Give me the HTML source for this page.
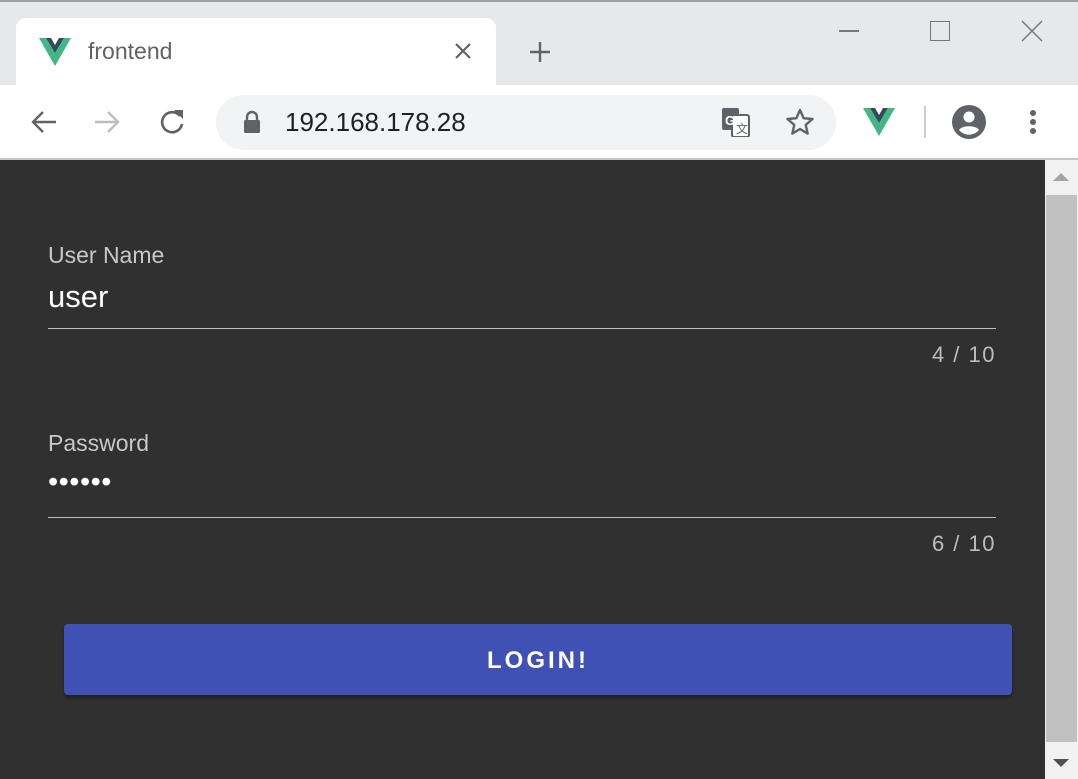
<!DOCTYPE html>
<html><head><style>
*{margin:0;padding:0;box-sizing:border-box}
body{width:1078px;height:779px;overflow:hidden;font-family:"Liberation Sans",sans-serif;background:#fff;position:relative}
.a{position:absolute}
</style></head><body>
<div class="a" style="left:0;top:0;width:1078px;height:2px;background:#a0a0a0"></div>
<div class="a" style="left:0;top:2px;width:1078px;height:83px;background:#e6e9ec"></div>
<div class="a" style="left:16px;top:18px;width:480px;height:70px;background:#fff;border-radius:10px 10px 0 0"></div>
<svg class="a" style="left:38px;top:38px" width="34" height="28" viewBox="0 0 34 28"><path d="M1 0h7l9 15 9-15h7L17 28z" fill="#41b883"/><path d="M8 0h5l4 7 4-7h5l-9 15z" fill="#35495e"/></svg>
<div class="a" style="left:88px;top:38px;font-size:23px;color:#5f6368">frontend</div>
<svg class="a" style="left:454px;top:42px" width="18" height="18"><path d="M2 2l14 14M16 2L2 16" stroke="#5f6368" stroke-width="2.2"/></svg>
<svg class="a" style="left:528px;top:40px" width="24" height="24"><path d="M12 2v20M2 12h20" stroke="#5f6368" stroke-width="2.4"/></svg>
<div class="a" style="left:839px;top:30px;width:20px;height:1.5px;background:#777"></div>
<div class="a" style="left:930px;top:21px;width:20px;height:20px;border:1.5px solid #777"></div>
<svg class="a" style="left:1021px;top:20px" width="22" height="22"><path d="M1 1l20 20M21 1L1 21" stroke="#777" stroke-width="1.5"/></svg>
<div class="a" style="left:0;top:85px;width:1078px;height:74px;background:#fff"></div>
<div class="a" style="left:0;top:158px;width:1078px;height:2px;background:#c8c8c8"></div>
<svg class="a" style="left:28px;top:108px" width="32" height="28"><path d="M28 14H5M15 4L5 14l10 10" stroke="#5f6368" stroke-width="2.4" fill="none"/></svg>
<svg class="a" style="left:92px;top:108px" width="32" height="28"><path d="M3 14h23M16 4l10 10-10 10" stroke="#bdbdbd" stroke-width="2.4" fill="none"/></svg>
<svg class="a" style="left:156px;top:106px" width="32" height="32" viewBox="0 0 32 32"><path d="M24 10A10 10 0 1 0 26 18" stroke="#5f6368" stroke-width="2.6" fill="none"/><path d="M18 4h9v9z" fill="#5f6368"/></svg>
<div class="a" style="left:216px;top:95px;width:620px;height:55px;background:#f1f3f4;border-radius:28px"></div>
<svg class="a" style="left:242px;top:110px" width="20" height="24"><path d="M5 10V7a5 5 0 0 1 10 0v3" stroke="#5f6368" stroke-width="2.4" fill="none"/><rect x="2" y="10" width="16" height="13" rx="1.5" fill="#5f6368"/></svg>
<div class="a" style="left:285px;top:107px;font-size:26px;color:#202124">192.168.178.28</div>
<svg class="a" style="left:720px;top:107px" width="32" height="30"><rect x="2" y="1" width="17" height="22" rx="2" fill="#5f6368"/><rect x="12" y="8" width="17" height="22" rx="2" fill="#fff" stroke="#5f6368" stroke-width="2"/><text x="5" y="18" font-size="13" font-weight="bold" fill="#fff" font-family="Liberation Sans">G</text><text x="16" y="26" font-size="12" fill="#5f6368" font-family="Liberation Sans">文</text></svg>
<svg class="a" style="left:784px;top:107px" width="32" height="30" viewBox="0 0 32 30"><path d="M16 3l3.6 8.2 8.9.8-6.8 5.9 2 8.7L16 22l-7.7 4.6 2-8.7-6.8-5.9 8.9-.8z" fill="none" stroke="#5f6368" stroke-width="2.4" stroke-linejoin="round"/></svg>
<svg class="a" style="left:862px;top:107px" width="34" height="30" viewBox="0 0 34 28"><path d="M1 0h7l9 15 9-15h7L17 28z" fill="#41b883"/><path d="M8 0h5l4 7 4-7h5l-9 15z" fill="#35495e"/></svg>
<div class="a" style="left:924px;top:106px;width:2px;height:32px;background:#ccc"></div>
<svg class="a" style="left:952px;top:105px" width="34" height="34" viewBox="0 0 34 34"><circle cx="17" cy="17" r="17" fill="#5f6368"/><circle cx="17" cy="12" r="5.5" fill="#fff"/><path d="M7 25c3-5 17-5 20 0a13 13 0 0 1-20 0z" fill="#fff"/></svg>
<div class="a" style="left:1030px;top:110px;width:6px;height:6px;border-radius:3px;background:#5f6368;box-shadow:0 9px 0 #5f6368,0 18px 0 #5f6368"></div>
<div class="a" style="left:0;top:160px;width:1045px;height:619px;background:#303030"></div>
<div class="a" style="left:1045px;top:160px;width:33px;height:619px;background:#f1f1f1"></div>
<div class="a" style="left:1046px;top:195px;width:31px;height:547px;background:#c1c1c1"></div>
<svg class="a" style="left:1052px;top:172px" width="18" height="10"><path d="M1 9l8-8 8 8z" fill="#a3a3a3"/></svg>
<svg class="a" style="left:1052px;top:758px" width="18" height="10"><path d="M1 1l8 8 8-8z" fill="#505050"/></svg>
<div class="a" style="left:48px;top:242px;font-size:23px;color:#c8c8c8">User Name</div>
<div class="a" style="left:48px;top:279px;font-size:31px;color:#fff">user</div>
<div class="a" style="left:48px;top:328px;width:948px;height:1px;background:#bdbdbd"></div>
<div class="a" style="left:796px;top:342px;width:200px;text-align:right;font-size:22px;letter-spacing:1.5px;color:#bdbdbd">4 / 10</div>
<div class="a" style="left:48px;top:430px;font-size:23px;color:#c8c8c8">Password</div>
<div class="a" style="left:48px;top:466px;font-size:29px;color:#fff;letter-spacing:0.5px">••••••</div>
<div class="a" style="left:48px;top:517px;width:948px;height:1px;background:#bdbdbd"></div>
<div class="a" style="left:796px;top:531px;width:200px;text-align:right;font-size:22px;letter-spacing:1.5px;color:#bdbdbd">6 / 10</div>
<div class="a" style="left:64px;top:624px;width:948px;height:71px;background:#3f51b5;border-radius:4px;box-shadow:0 3px 3px rgba(0,0,0,.35);color:#fff;font-size:24px;font-weight:bold;letter-spacing:3px;text-align:center;line-height:73px">LOGIN!</div>
</body></html>
